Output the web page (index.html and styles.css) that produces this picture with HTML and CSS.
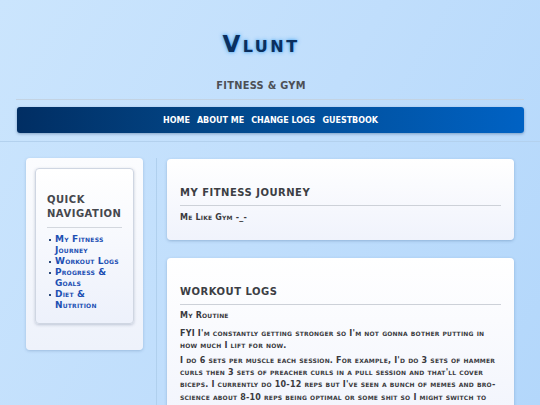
FILE: index.html
```html
<!DOCTYPE html>
<html>
<head>
<meta charset="utf-8">
<link rel="stylesheet" href="styles.css">
</head>
<body>
<div class="page">
  <header class="site-header">
    <h1 class="logo">Vlunt</h1>
    <p class="tagline">FITNESS &amp; GYM</p>
  </header>
  <nav class="main-nav">
    <a href="#">HOME</a>
    <a href="#">ABOUT ME</a>
    <a href="#">CHANGE LOGS</a>
    <a href="#">GUESTBOOK</a>
  </nav>
  <div class="divider"></div>
  <div class="layout">
    <aside class="sidebar">
      <div class="side-box">
        <h2 class="side-title">QUICK NAVIGATION</h2>
        <ul class="side-list">
          <li><a href="#">My Fitness Journey</a></li>
          <li><a href="#">Workout Logs</a></li>
          <li><a href="#">Progress &amp; Goals</a></li>
          <li><a href="#">Diet &amp; Nutrition</a></li>
        </ul>
      </div>
    </aside>
    <div class="vline"></div>
    <main class="content">
      <section class="card">
        <h2 class="card-title">MY FITNESS JOURNEY</h2>
        <p class="lead">Me Like Gym -_-</p>
      </section>
      <section class="card">
        <h2 class="card-title">WORKOUT LOGS</h2>
        <p class="lead sub">My Routine</p>
        <p>FYI I'm constantly getting stronger so I'm not gonna bother putting in how much I lift for now.</p>
        <p>I do 6 sets per muscle each session. For example, I'd do 3 sets of hammer curls then 3 sets of preacher curls in a pull session and that'll cover biceps. I currently do 10-12 reps but I've seen a bunch of memes and bro-science about 8-10 reps being optimal or some shit so I might switch to that lol. Here are some examples of the exercises I choose from in each session.</p>
      </section>
    </main>
  </div>
</div>
</body>
</html>
```
FILE: styles.css
```css
html, body {
  margin: 0;
  padding: 0;
  height: 100%;
}
body {
  background: linear-gradient(120deg, #cbe5fd 0%, #c0defc 50%, #b3d7fb 100%);
  font-family: "DejaVu Sans", "Liberation Sans", sans-serif;
  font-variant: small-caps;
  overflow: hidden;
}
.page {
  padding: 0 16px 0 17px;
}
.site-header {
  text-align: center;
  padding-top: 30px;
  border-bottom: 1px solid #c3d3e3;
  margin-left: -1px;
}
.logo {
  margin: 0;
  padding-right: 18px;
  font-size: 23px;
  line-height: 28px;
  font-weight: bold;
  color: #0b2f5e;
  letter-spacing: 2.5px;
  text-shadow: 0 0 4px rgba(60, 160, 240, 0.9), 0 0 2px rgba(120, 190, 255, 0.9);
}
.tagline {
  margin: 0;
  padding: 21px 18px 6px 0;
  font-size: 9.8px;
  line-height: 14px;
  font-weight: bold;
  color: #4d4f55;
  letter-spacing: 0.3px;
}
.main-nav {
  margin-top: 7px;
  height: 26px;
  border-radius: 3px;
  background: linear-gradient(90deg, #012e63 0%, #024789 40%, #0062c4 100%);
  box-shadow: 0 1px 3px rgba(0, 40, 90, 0.35);
  display: flex;
  justify-content: center;
  align-items: center;
  gap: 7px;
}
.main-nav a {
  color: #fff;
  text-decoration: none;
  font-size: 8px;
  font-weight: bold;
  letter-spacing: 0;
}
.divider {
  margin: 8px -16px 0 -17px;
  height: 1px;
  background: #b3d1ee;
}
.layout {
  display: flex;
  padding: 16px 10px 0 9px;
}
.sidebar {
  width: 117px;
  flex: none;
  align-self: flex-start;
  background: linear-gradient(180deg, #fbfcfe 0%, #eef2fb 100%);
  border-radius: 4px;
  box-shadow: 0 1px 3px rgba(40, 80, 130, 0.25);
  padding: 10px 9px 26px 9px;
  box-sizing: border-box;
}
.side-box {
  border: 1px solid #cfd6e2;
  border-radius: 4px;
  background: linear-gradient(180deg, #ffffff 0%, #edf1fb 100%);
  box-shadow: 0 1px 3px rgba(40, 60, 100, 0.25);
  padding: 24px 11px 12px 11px;
}
.side-title {
  margin: 0;
  font-size: 10px;
  line-height: 14px;
  font-weight: bold;
  color: #45474d;
  letter-spacing: 0.5px;
  padding-bottom: 6px;
  border-bottom: 1px solid #d3d7de;
}
.side-list {
  margin: 5.5px 0 0 0;
  padding: 0 0 0 8px;
  list-style: none;
}
.side-list li {
  position: relative;
  font-size: 9px;
  line-height: 11.1px;
  font-weight: bold;
  letter-spacing: 0.2px;
}
.side-list li::before {
  content: "";
  position: absolute;
  left: -6px;
  top: 5px;
  width: 2px;
  height: 2px;
  background: #2d4a7a;
}
.side-list a {
  color: #1c4fb3;
  text-decoration: none;
}
.vline {
  width: 1px;
  flex: none;
  background: #b0d0ee;
  margin: 0 10px 0 13px;
  min-height: 300px;
}
.content {
  flex: 1;
  display: flex;
  flex-direction: column;
  gap: 18px;
  padding-top: 1px;
}
.card {
  background: linear-gradient(180deg, #ffffff 0%, #f0f3fc 100%);
  border-radius: 4px;
  box-shadow: 0 1px 3px rgba(40, 80, 130, 0.3);
  padding: 27px 13px 16px 13px;
}
.card-title {
  margin: 0;
  font-size: 10px;
  line-height: 14px;
  font-weight: bold;
  color: #3c3e44;
  letter-spacing: 0.5px;
  padding-bottom: 5px;
  border-bottom: 1px solid #cdd1d8;
}
.card p {
  margin: 2.5px 0 0 0;
  font-size: 8px;
  line-height: 12.3px;
  font-weight: bold;
  letter-spacing: 0.2px;
  color: #3a3a3e;
}
.card p.lead {
  margin-top: 5.5px;
}
.card p.sub {
  margin-bottom: 5px;
}
```
